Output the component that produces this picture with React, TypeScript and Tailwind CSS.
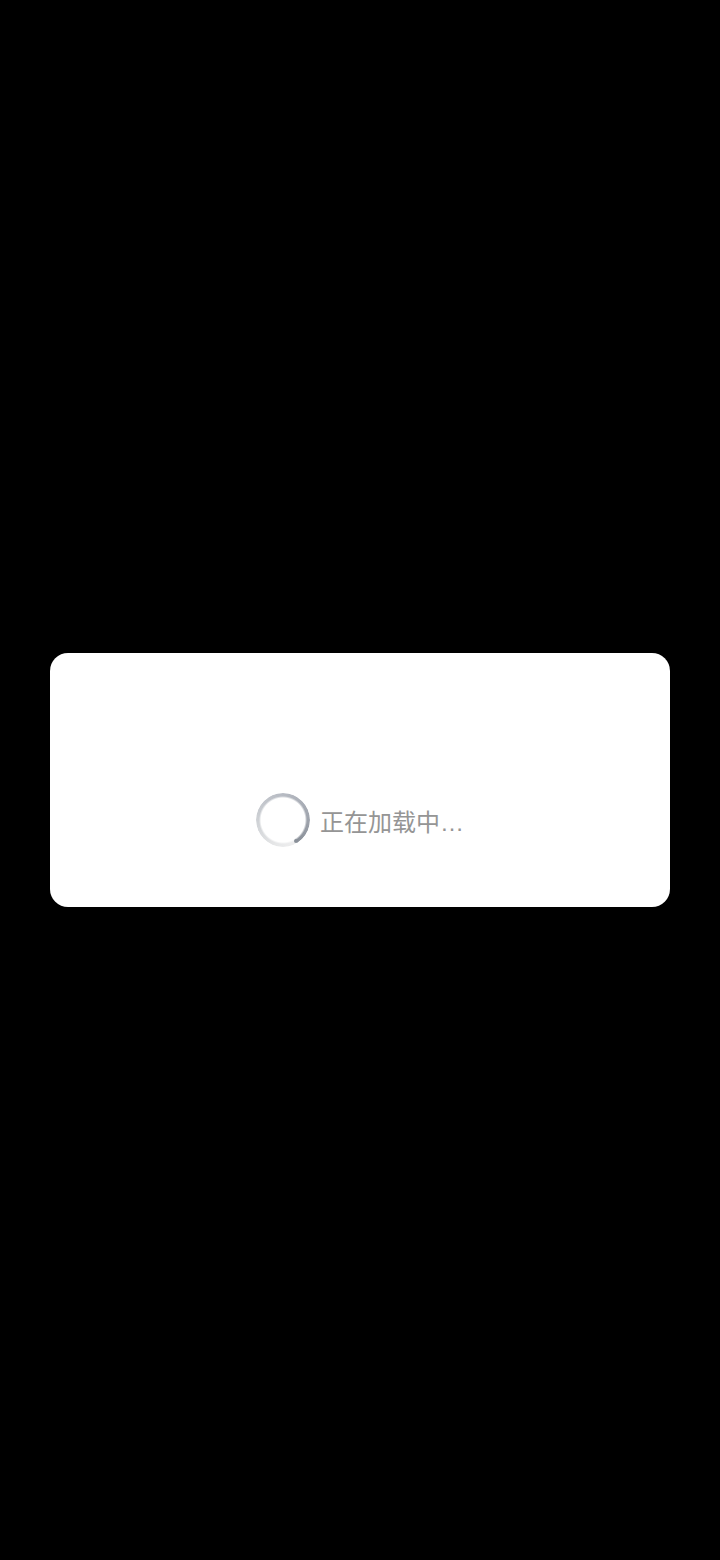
import React from 'react';

function App() {
  return (
    <div className="min-h-screen flex items-center bg-black px-[50px] font-['Liberation_Sans','Noto_Sans_CJK_SC',sans-serif]">
      <LoadingCard message="正在加载中…" />
    </div>
  );
}

function LoadingCard({ message }: { message: string }) {
  return (
    <div
      role="status"
      lang="zh-CN"
      className="w-full flex items-center justify-center gap-2.5 rounded-[18px] bg-white pt-[140px] pb-[60px]"
    >
      <Spinner />
      <span className="text-2xl leading-normal pt-1.5 text-[#959595]">{message}</span>
    </div>
  );
}

function Spinner() {
  return (
    <div aria-hidden="true" className="relative size-[54px]">
      <div className="size-full rounded-full bg-[conic-gradient(from_148deg,#efeff0_0deg,#e6e7e8_50deg,#cdd0d4_125deg,#b7bbc3_210deg,#a2a7b0_290deg,#8a9099_360deg)] [mask-image:radial-gradient(circle_closest-side,transparent_22px,black_24px,black_27px)]" />
      {/* rounded end of the arc */}
      <span className="absolute left-[38px] top-[46px] size-1 rounded-full bg-[#8a9099]" />
    </div>
  );
}

export default App;
